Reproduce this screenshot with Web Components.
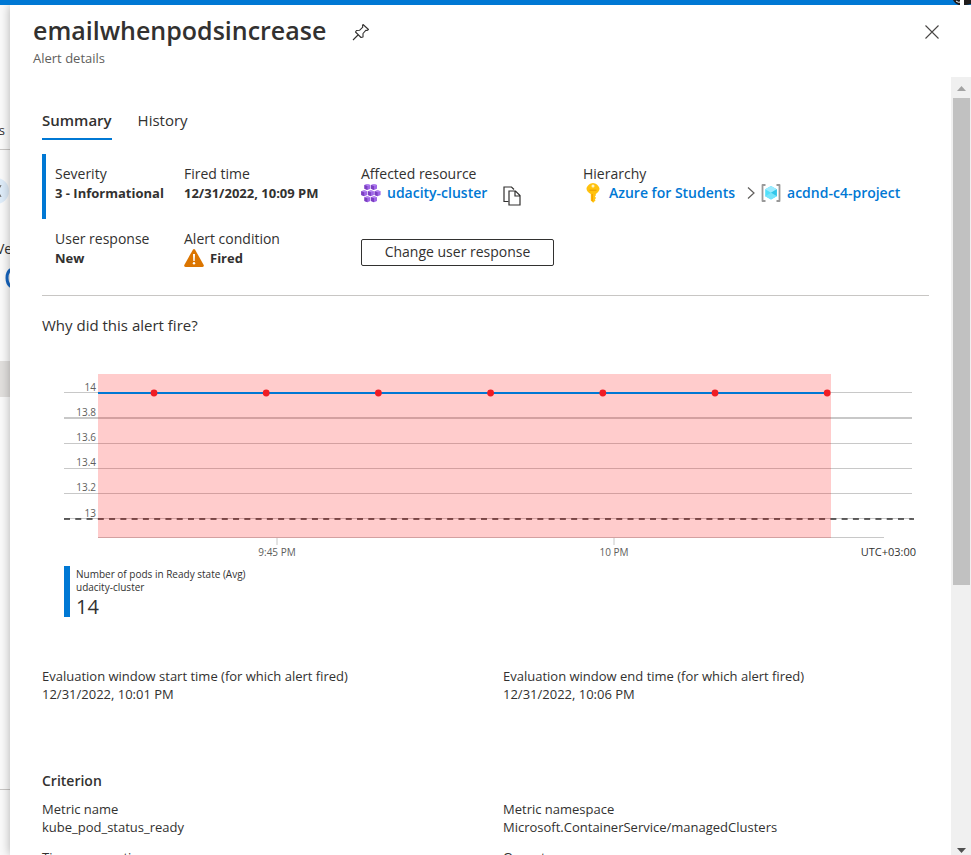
<!DOCTYPE html>
<html lang="en">
<head>
<meta charset="utf-8">
<title>Alert details</title>
<style>
  html, body { margin: 0; height: 100%; }
  body { font-family: "Open Sans", "Noto Sans", sans-serif; font-size: 13px; line-height: 18px; color: #323130; background: #fff; }
</style>
</head>
<body>
<portal-shell>
  <alert-panel heading="emailwhenpodsincrease" subtitle="Alert details">
    <panel-tabs></panel-tabs>
    <alert-summary>
      <alert-field label="Severity"><b>3 - Informational</b></alert-field>
      <alert-field label="Fired time"><b>12/31/2022, 10:09 PM</b></alert-field>
      <alert-field label="Affected resource"><resource-link icon="cluster">udacity-cluster</resource-link><copy-button></copy-button></alert-field>
      <alert-field label="Hierarchy"><resource-link icon="key">Azure for Students</resource-link><portal-icon name="chevron"></portal-icon><resource-link icon="group">acdnd-c4-project</resource-link></alert-field>
      <alert-field label="User response"><b>New</b></alert-field>
      <alert-field label="Alert condition"><portal-icon name="warning"></portal-icon><b>Fired</b></alert-field>
      <outline-button>Change user response</outline-button>
    </alert-summary>
    <metric-chart></metric-chart>
    <detail-grid></detail-grid>
  </alert-panel>
</portal-shell>
<script>
const ICONS = {
  pin: '<svg width="18" height="18" viewBox="0 0 18 18" fill="none" stroke="#323130" stroke-width="1.1" stroke-linejoin="round"><path d="M11 1.500L16.500 6.500L15 7.500L14 7.200L11 10.500L11 14L9 14.500L3.500 9L4.500 7.500L7.500 7.300L10.800 4.200L10.500 2.800ZM6 12L1 17"/></svg>',
  close: '<svg width="16" height="16" viewBox="0 0 16 16" fill="none" stroke="#484644" stroke-width="1.100"><path d="M1.500 1.500L14.500 14.500M14.500 1.500L1.500 14.500"/></svg>',
  copy: '<svg width="18" height="20" viewBox="0 0 18 20" fill="#fff" stroke="#323130" stroke-width="1.200"><path d="M5.500 15.500H1V1H8.500L11 3.500"/><path d="M6 5H12.500L17 9.500V19H6ZM12 5V10H17"/></svg>',
  key: '<svg width="14" height="20" viewBox="0 0 14 20"><path d="M7 0C9.500 0 13.500 2.800 13.500 5.800C13.500 8 11.500 9.800 9.800 11V12.500L8.800 13.500L9.800 14.500V15.500L8.800 16.300L9.600 17.300L7.200 19.800L4.800 17.500V11C2.500 9.800.5 8 .5 5.800C.5 2.800 4.500 0 7 0Z" fill="#ffc20e"/><circle cx="7" cy="3" r="1.500" fill="#fff3c4"/><path d="M3.500 7.200H10.500" stroke="#e89a00"/><path d="M6.200 11V18" stroke="#f59b00" stroke-width="1.200"/></svg>',
  chevron: '<svg width="8" height="14" viewBox="0 0 8 14" fill="none" stroke="#605e5c" stroke-width="1.200"><path d="M1 1.500L7 7L1 12.500"/></svg>',
  group: '<svg width="20" height="18" viewBox="0 0 20 18"><path d="M4.500 1H1.500V17H4.500M15.500 1H18.500V17H15.500" fill="none" stroke="#999" stroke-width="1.800" stroke-linejoin="round"/><path d="M10 2L15.800 5.300V12.300L10 15.600L4.200 12.300V5.300Z" fill="#50e0fa"/><path d="M10 2L15.800 5.300L10 8.800L4.200 5.300Z" fill="#9cebff"/><path d="M15.800 5.300V12.300L10 8.800Z" fill="#32c5e9"/><path d="M4.200 12.300L10 8.800L15.800 12.300L10 15.600Z" fill="#76e4fb"/></svg>',
  warning: '<svg width="20" height="18" viewBox="0 0 20 18"><path d="M8.900.700Q10-.700 11.100.700L19.700 15.900Q20.400 17.900 18.500 18H1.500Q-.400 17.900.300 15.900Z" fill="#db7500"/><path d="M9 5H11L10.700 12H9.300Z" fill="#fff"/><circle cx="10" cy="14.300" r="1.200" fill="#fff"/></svg>',
  cluster: (() => {
    const cube = ([x, y]) => `<path d="M${x} ${y}l3 -1l3 1v3.700l-3 1.300l-3 -1.300z" fill="#a067e8"/><path d="M${x} ${y}l3 -1l3 1l-3 1z" fill="#b486f0"/><path d="M${x} ${y}l3 1v4l-3 -1.300z" fill="#7b3fc0"/>`;
    return `<svg width="20" height="19" viewBox="0 0 20 19">${[[3.400,1.100],[10,1.100],[.2,7.200],[6.900,7.200],[13.600,7.200],[3.400,13.300],[10,13.300]].map(cube).join('')}</svg>`;
  })()
};

function define(name, css, html, after) {
  const template = document.createElement('template');
  template.innerHTML = `<style>*{box-sizing:border-box}${css}</style>${html}`;
  customElements.define(name, class extends HTMLElement {
    connectedCallback() {
      if (this.shadowRoot) return;
      const root = this.attachShadow({ mode: 'open' });
      root.append(template.content.cloneNode(true));
      if (after) after(root, this);
    }
  });
}

define('portal-icon', ':host{display:inline-flex;flex:none}svg{display:block}', '', (root, host) => {
  root.innerHTML += ICONS[host.getAttribute('name')];
});

define('portal-shell', `
  :host{display:flex;flex-direction:column;height:100vh;overflow:hidden}
  .bar{height:5px;flex:none;background:#0078d4;display:flex;justify-content:flex-end}
  .bar svg{display:block}
  .main{flex:1;min-height:0;display:grid;grid-template-columns:10px minmax(0,1fr)}
  `, `
  <div class="bar"><svg width="18" height="5" viewBox="0 0 18 5"><path d="M0 0H18V4Q15 5 12 5H6Q2 4 0 0Z" fill="#201c1c"/><path d="M3 1Q5 3 8 2" stroke="#fff" fill="none"/><rect x="7" width="4" height="5" fill="#fff"/></svg></div>
  <div class="main"><page-edge></page-edge><slot></slot></div>`);

define('page-edge', `
  :host{display:flex;flex-direction:column;overflow:hidden;background:#fafafa}
  div{flex:none;display:flex;justify-content:flex-end;align-items:flex-end}
  .tab{height:145px;border-bottom:1px solid #c8c6c4;padding:0 5px 10px 0}
  .round{height:54px}
  .round svg,.ring svg{display:block}
  .ver{height:54px;justify-content:flex-start;font-size:14px}
  .ver span{margin-left:-4px}
  .ring{height:30px}
  .gap{height:73px}
  .block{height:36px;background:#e1dfdd}
  .line{height:393px;border-bottom:1px solid #c8c6c4}
  `, `
  <div class="tab"><span>s</span></div>
  <div class="round"><svg width="10" height="26" viewBox="0 0 10 26"><circle cx="-4" cy="13" r="13" fill="#deecf9"/><path d="M1 7L-2 13L1 19" stroke="#605e5c" fill="none"/></svg></div>
  <div class="ver"><span>Ve</span></div>
  <div class="ring"><svg width="10" height="20" viewBox="0 0 10 20"><path d="M12 1Q7 3 7 10T12 19" stroke="#1565c0" stroke-width="3" fill="none"/></svg></div>
  <div class="gap"></div><div class="block"></div><div class="line"></div>`);

define('alert-panel', `
  :host{display:flex;flex-direction:column;min-width:0;min-height:0;background:#fff;box-shadow:0 0 10px rgba(0,0,0,.3);position:relative;clip-path:inset(0 0 0 -10px)}
  header{flex:none;display:flex;align-items:flex-start;height:72px;padding:8px 31px 0 23px}
  .names{display:flex;flex-direction:column}
  h1{margin:0;font-size:25px;line-height:34px;font-weight:600}
  p{margin:0;line-height:22px;color:#605e5c}
  button{border:0;background:none;padding:0;display:flex}
  .pin{margin:10px 0 0 26px}
  .close{margin:11px 0 0 auto}
  .body{flex:1;min-height:0;display:grid;grid-template-columns:minmax(0,1fr) 20px}
  .content{overflow:hidden;padding:32px 22px 0 32px}
  `, `
  <header><div class="names"><h1></h1><p></p></div>
  <button class="pin" aria-label="Pin"><portal-icon name="pin"></portal-icon></button>
  <button class="close" aria-label="Close"><portal-icon name="close"></portal-icon></button></header>
  <div class="body"><div class="content"><slot></slot></div><scroll-track></scroll-track></div>`, (root, host) => {
  root.querySelector('h1').textContent = host.getAttribute('heading');
  root.querySelector('p').textContent = host.getAttribute('subtitle');
});

define('scroll-track', `
  :host{display:flex;flex-direction:column;background:#f0f0f0;padding:0 1px 0 2px}
  svg{display:block;flex:none;margin:0 auto}
  .thumb{flex:487;background:#c1c1c1}
  .rest{flex:257}
  `, `<svg width="9" height="21" viewBox="0 0 9 21"><path d="M0 14L4.500 9L9 14Z" fill="#a3a3a3"/></svg>
  <div class="thumb"></div><div class="rest"></div>
  <svg width="9" height="13" viewBox="0 0 9 13"><path d="M0 6L4.500 11L9 6Z" fill="#505050"/></svg>`);

define('panel-tabs', `
  :host{display:flex;gap:26px}
  button{font:inherit;font-size:15px;line-height:22px;color:inherit;background:none;border:0;border-bottom:2px solid transparent;padding:0 0 7px}
  [aria-selected=true]{font-weight:600;border-color:#0078d4}
  `, `<button role="tab" aria-selected="true">Summary</button><button role="tab" aria-selected="false">History</button>`);

define('alert-summary', `
  :host{display:grid;grid-template-columns:13px 129px 177px 222px minmax(0,1fr);grid-auto-rows:65px;margin-top:14px;padding-bottom:11px;border-bottom:1px solid #c8c6c4}
  i{background:#0078d4;width:4px}
  ::slotted(outline-button){justify-self:start;align-self:start;margin-top:20px}
  `, '<i></i><slot></slot>', (root, host) => {
  const spacer = document.createElement('i');
  host.insertBefore(spacer, host.children[4]);
});

define('alert-field', `
  :host{display:block;padding-top:10px;white-space:nowrap}
  .label{line-height:20px;font-size:14px}
  .value{display:flex;align-items:center;height:18px;gap:6px}
  ::slotted(b){font-weight:700;font-size:13px}
  ::slotted(copy-button){margin:5px 0 0 10px}
  ::slotted(portal-icon[name=chevron]){margin-left:6px}
  `, '<div class="label"></div><div class="value"><slot></slot></div>', (root, host) => {
  root.querySelector('.label').textContent = host.getAttribute('label');
});

define('resource-link', `
  :host{display:inline-flex}
  a{display:flex;align-items:center;gap:6px;color:#0078d4;text-decoration:none;font-weight:600;font-size:14px}
  span{display:flex;justify-content:center;width:20px}
  `, '<a href="#"><span></span><slot></slot></a>', (root, host) => {
  root.querySelector('span').innerHTML = ICONS[host.getAttribute('icon')];
});

define('copy-button', ':host{display:inline-flex}button{border:0;background:none;padding:0;display:flex}',
  '<button aria-label="Copy"><portal-icon name="copy"></portal-icon></button>');

define('outline-button', `
  :host{display:block}
  button{font:inherit;font-size:14px;line-height:23px;font-weight:500;color:#323130;background:#fff;border:1px solid #323130;border-radius:2px;padding:0 0 2px;width:193px}
  `, '<button><slot></slot></button>');

define('metric-chart', `
  :host{display:block;padding-top:19px}
  h2{margin:0;font-size:15px;line-height:20px;font-weight:400}
  .plot{margin:31px 13px 0 22px}
  svg{display:block;width:100%;height:200px;overflow:visible;font-size:10px}
  .legend{display:flex;flex-direction:column;margin-left:22px;border-left:6px solid #0078d4;padding-left:6px;height:51px;font-size:10px;line-height:16px}
  .legend span:nth-child(2){line-height:10px}
  strong{font-size:20px;line-height:30px;font-weight:500}
  `, `<h2>Why did this alert fire?</h2><div class="plot"></div>
  <div class="legend"><span>Number of pods in Ready state (Avg)</span><span>udacity-cluster</span><strong>14</strong></div>`, root => {
  // Horizontal positions are shares of the plot's width; vertical ones are pixels.
  const W = 852, px = x => (x / W * 100).toFixed(3) + '%';
  const line = (x1, x2, y, extra) => `<line x1="${px(x1)}" x2="${px(x2)}" y1="${y}" y2="${y}" ${extra}/>`;
  // label, line position, line thickness, text baseline
  const rows = [['14', 26.5, 1, 25], ['13.8', 52, 2, 50], ['13.6', 77.5, 1, 75], ['13.4', 102.5, 1, 100], ['13.2', 127.5, 1, 125], ['13', 152.5, 1, 151]];
  let s = '';
  for (const [, y, w] of rows) s += line(0, 848, y, `stroke="#c8c8c8" stroke-width="${w}"`);
  s += line(34, 820, 171.5, 'stroke="#c8c8c8"');
  for (const x of [213, 550]) s += `<line x1="${px(x)}" x2="${px(x)}" y1="171" y2="179" stroke="#c8c8c8"/>`;
  s += line(0, 850, 153, 'stroke="#323130" stroke-width="1.5" stroke-dasharray="6 5.27"');
  s += `<rect x="${px(34)}" y="8" width="${px(733)}" height="164" fill="#ff0000" fill-opacity=".2"/>`;
  s += line(34, 763, 27, 'stroke="#0078d4" stroke-width="2"');
  for (let i = 0; i < 7; i++) s += `<circle cx="${px(90 + i * 112.200)}" cy="27" r="3.400" fill="#f01c24"/>`;
  for (const [t, , , base] of rows) s += `<text x="${px(32)}" y="${base}" text-anchor="end" fill="#605e5c">${t}</text>`;
  s += `<text x="${px(213)}" y="190" text-anchor="middle" fill="#605e5c">9:45 PM</text>`;
  s += `<text x="${px(550)}" y="190" text-anchor="middle" fill="#605e5c">10 PM</text>`;
  s += `<text x="100%" y="190" text-anchor="end" font-size="11" fill="#323130">UTC+03:00</text>`;
  root.querySelector('.plot').innerHTML = `<svg role="img" aria-label="Pods in Ready state">${s}</svg>`;
});

define('detail-grid', `
  :host{display:block}
  dl{display:grid;grid-template-columns:461px minmax(0,1fr);row-gap:12px;margin:0}
  dt,dd{margin:0;line-height:18px}
  .window{margin-top:50px}
  h2{margin:68px 0 9px;font-size:14px;line-height:20px;font-weight:600}
  `, `
  <dl class="window">
    <div><dt>Evaluation window start time (for which alert fired)</dt><dd>12/31/2022, 10:01 PM</dd></div>
    <div><dt>Evaluation window end time (for which alert fired)</dt><dd>12/31/2022, 10:06 PM</dd></div>
  </dl>
  <h2>Criterion</h2>
  <dl>
    <div><dt>Metric name</dt><dd>kube_pod_status_ready</dd></div>
    <div><dt>Metric namespace</dt><dd>Microsoft.ContainerService/managedClusters</dd></div>
    <div><dt>Time aggregation</dt></div>
    <div><dt>Operator</dt></div>
  </dl>`);
</script>
</body>
</html>
